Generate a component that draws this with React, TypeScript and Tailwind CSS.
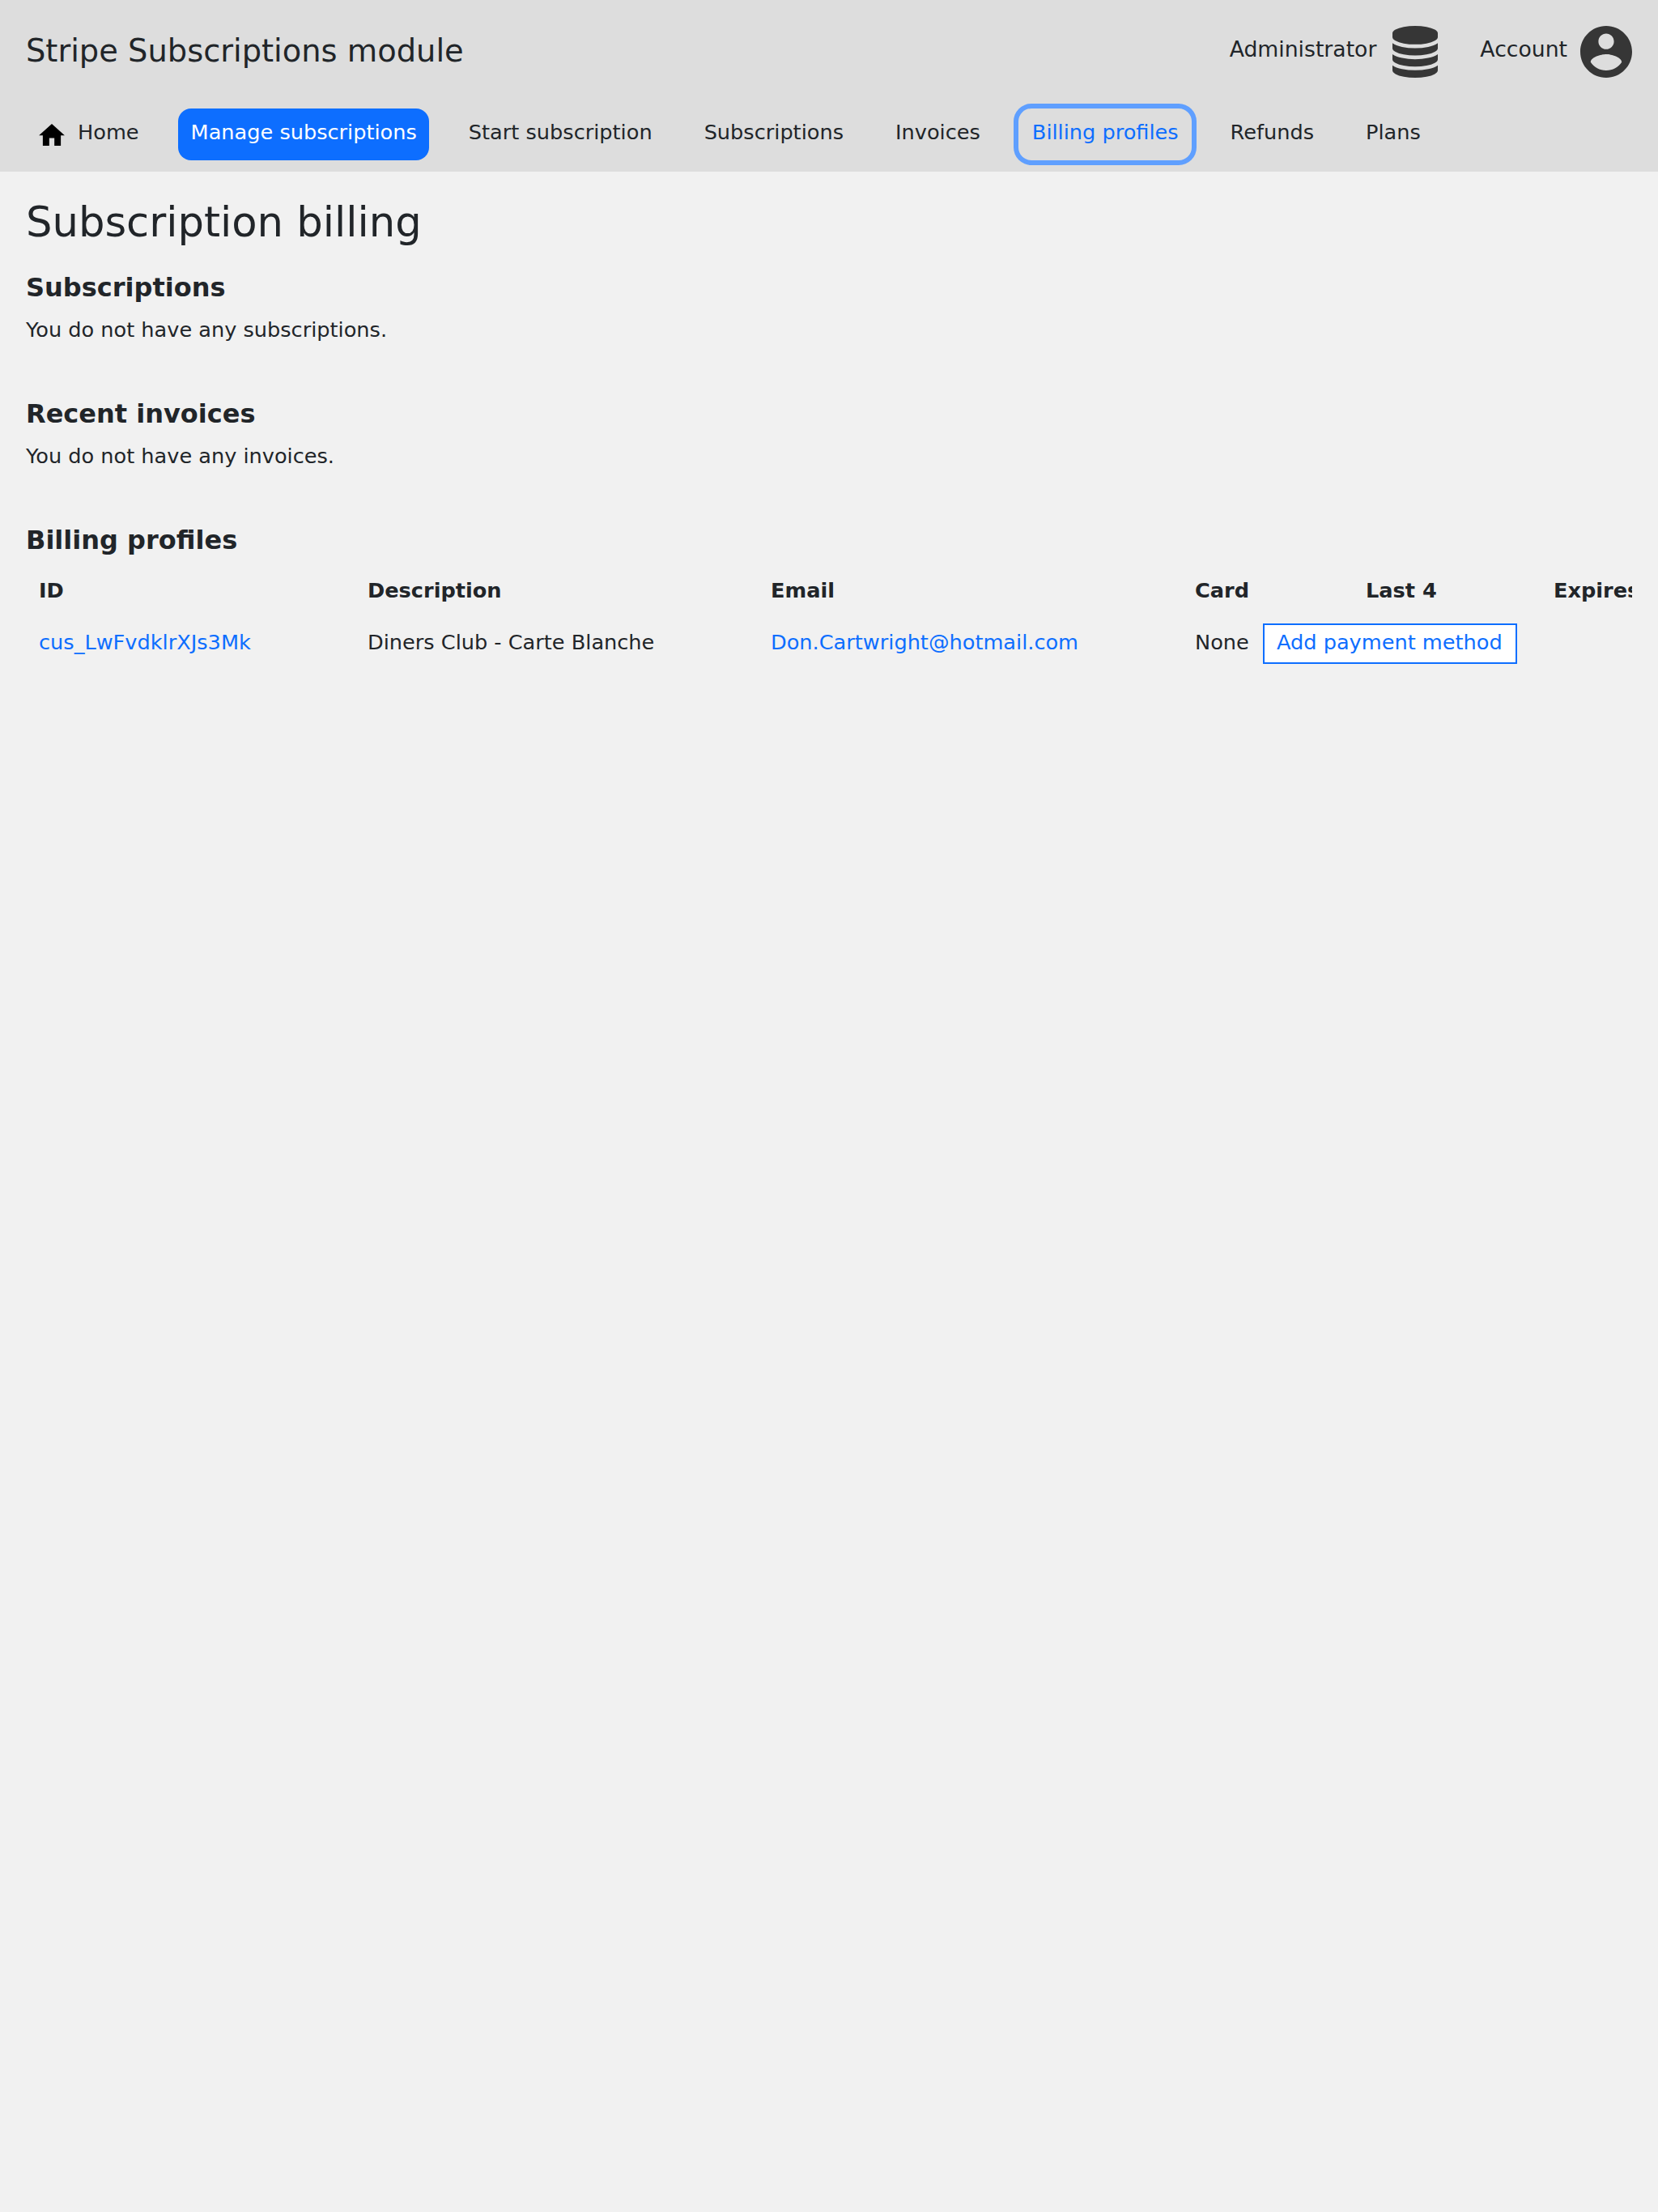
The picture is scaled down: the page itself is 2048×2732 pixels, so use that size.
import React from "react";

const navItems = [
  { label: "Home", kind: "home" },
  { label: "Manage subscriptions", kind: "active" },
  { label: "Start subscription", kind: "plain" },
  { label: "Subscriptions", kind: "plain" },
  { label: "Invoices", kind: "plain" },
  { label: "Billing profiles", kind: "focus" },
  { label: "Refunds", kind: "plain" },
  { label: "Plans", kind: "plain" },
];

const kindClass: Record<string, string> = {
  home: "px-4",
  plain: "px-4",
  active: "mr-px bg-[#0d6eff] pr-[15px] pl-4 text-white",
  focus: "-ml-px pr-4 pl-[17px] text-[#0d6eff] ring-6 ring-[#5f9fff]",
};

function HomeIcon() {
  return (
    <svg viewBox="2 3 20 17" className="mt-[19px] mr-4 h-[27px] w-8 shrink-0 fill-black">
      <path d="M10 20v-6h4v6h5v-8h3L12 3 2 12h3v8z" />
    </svg>
  );
}

function DatabaseIcon() {
  return (
    <svg viewBox="0 0 1536 1792" preserveAspectRatio="none" className="h-16 w-14 fill-[#363636]">
      <path d="M768 768q237 0 443-43t325-127v170q0 69-103 128t-280 93.5-385 34.5-385-34.5-280-93.5-103-128v-170q119 84 325 127t443 43zm0 768q237 0 443-43t325-127v170q0 69-103 128t-280 93.5-385 34.5-385-34.5-280-93.5-103-128v-170q119 84 325 127t443 43zm0-384q237 0 443-43t325-127v170q0 69-103 128t-280 93.5-385 34.5-385-34.5-280-93.5-103-128v-170q119 84 325 127t443 43zm0-1152q208 0 385 34.5t280 93.5 103 128v128q0 69-103 128t-280 93.5-385 34.5-385-34.5-280-93.5-103-128v-128q0-69 103-128t280-93.5 385-34.5z" />
    </svg>
  );
}

function AccountIcon() {
  return (
    <svg viewBox="2 2 20 20" className="h-16 w-16 fill-[#363636]">
      <path d="M12 2C6.48 2 2 6.48 2 12s4.48 10 10 10 10-4.48 10-10S17.52 2 12 2zm0 3c1.66 0 3 1.34 3 3s-1.34 3-3 3-3-1.34-3-3 1.34-3 3-3zm0 14.2c-2.5 0-4.71-1.28-6-3.22.03-1.99 4-3.08 6-3.08 1.99 0 5.97 1.09 6 3.08-1.29 1.94-3.5 3.22-6 3.22z" />
    </svg>
  );
}

function Section({ title, children }: { title: string; children: React.ReactNode }) {
  return (
    <section className="mb-16">
      <h2 className="mb-3 text-[32px] leading-[40px] font-bold">{title}</h2>
      {children}
    </section>
  );
}

const columns = "grid w-[2100px] grid-cols-[406px_498px_524px_211px_232px_1fr] pl-4";

export default function App() {
  return (
    <div className="min-h-[2732px] w-[2048px] overflow-hidden bg-[#f1f1f1] font-['DejaVu_Sans',sans-serif] text-[25.6px] leading-[40px] text-[#212529]">
      <header className="h-[212px] bg-[#dddddd] px-8 pt-8">
        <div className="flex h-16 justify-between">
          <div className="mt-px text-[38.4px] leading-[60px]">Stripe Subscriptions module</div>
          <div className="flex text-[26.667px]">
            <div className="flex">
              <span className="mt-[9px] mr-5">Administrator</span>
              <DatabaseIcon />
            </div>
            <div className="ml-[52px] flex">
              <span className="mt-[9px] mr-4">Account</span>
              <AccountIcon />
            </div>
          </div>
        </div>
        <nav className="mt-[38px] flex gap-8">
          {navItems.map((item) => (
            <a key={item.label} className={`flex h-16 rounded-2xl whitespace-nowrap ${kindClass[item.kind]}`}>
              {item.kind === "home" && <HomeIcon />}
              <span className="mt-[9px]">{item.label}</span>
            </a>
          ))}
        </nav>
      </header>
      <main className="px-8 pt-8">
        <h1 className="mb-[31px] text-[51.2px] leading-[60px]">Subscription billing</h1>
        <Section title="Subscriptions">
          <p>You do not have any subscriptions.</p>
        </Section>
        <Section title="Recent invoices">
          <p>You do not have any invoices.</p>
        </Section>
        <Section title="Billing profiles">
          <div className="overflow-hidden pt-[10px]">
            <div className={`${columns} font-bold`}>
              <div>ID</div>
              <div>Description</div>
              <div>Email</div>
              <div>Card</div>
              <div>Last 4</div>
              <div>Expires</div>
            </div>
            <div className={`${columns} mt-[21px]`}>
              <div className="pt-[3px] text-[#0d6eff]">cus_LwFvdklrXJs3Mk</div>
              <div className="pt-[3px]">Diners Club - Carte Blanche</div>
              <div className="pt-[3px] text-[#0d6eff]">Don.Cartwright@hotmail.com</div>
              <div className="col-span-3 flex">
                <span className="w-[84px] pt-[3px]">None</span>
                <a className="h-[50px] border-2 border-[#0d6eff] bg-white pr-4 pl-[15px] pt-px whitespace-nowrap text-[#0d6eff]">
                  Add payment method
                </a>
              </div>
            </div>
          </div>
        </Section>
      </main>
    </div>
  );
}
